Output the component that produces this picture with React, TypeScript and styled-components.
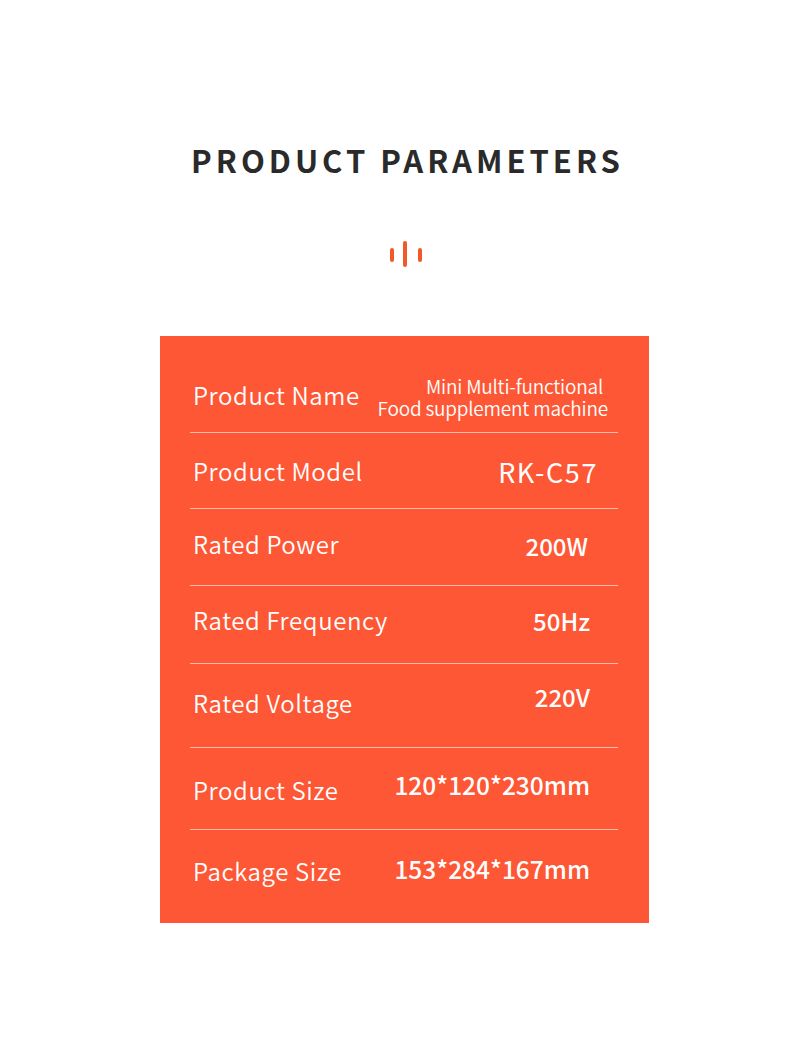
import * as React from 'react';
import styled, { createGlobalStyle } from 'styled-components';

const GlobalStyle = createGlobalStyle`
  html, body {
    margin: 0;
    padding: 0;
    background: #ffffff;
  }
  body {
    font-family: "Noto Sans CJK SC", "Noto Sans", sans-serif;
  }
`;

const Page = styled.div`
  width: 800px;
  height: 1060px;
  display: flex;
  flex-direction: column;
  align-items: center;
  background: #fff;
`;

const Title = styled.h1`
  margin: 138px 0 0 15px;
  font-size: 31px;
  line-height: 44px;
  font-weight: 700;
  letter-spacing: 4px;
  color: #2a2a2a;
`;

const Marker = styled.svg`
  display: block;
  margin-top: 59px;
  margin-left: 16px;
`;

const Card = styled.div`
  margin-top: 69px;
  margin-left: 9px;
  width: 458px;
  padding: 0 1px 0 30px;
  height: 587px;
  background: #fd5735;
  color: #fff;
`;

const Row = styled.div<{ $h: number; $last?: boolean }>`
  display: flex;
  justify-content: space-between;
  align-items: flex-start;
  width: 428px;
  height: ${(p) => p.$h}px;
  border-bottom: ${(p) => (p.$last ? 'none' : '1px solid rgba(255, 255, 255, 0.6)')};
`;

const Label = styled.div<{ $top: number }>`
  margin-top: ${(p) => p.$top}px;
  padding-left: 3px;
  font-size: 24px;
  line-height: 1;
  font-weight: 350;
  letter-spacing: 0.6px;
  white-space: nowrap;
`;

const Value = styled.div<{ $top: number; $right: number; $size?: number; $weight?: number; $spacing?: number }>`
  margin-top: ${(p) => p.$top}px;
  margin-right: ${(p) => p.$right}px;
  font-size: ${(p) => p.$size ?? 24}px;
  line-height: 1;
  font-weight: ${(p) => p.$weight ?? 500};
  letter-spacing: ${(p) => p.$spacing ?? 0}px;
  white-space: nowrap;
  text-align: right;
`;

const NameValue = styled.div`
  margin-top: 39px;
  margin-right: 10px;
  font-size: 19px;
  line-height: 22px;
  font-weight: 350;
  letter-spacing: -0.2px;
  text-align: right;
  white-space: nowrap;
`;

const NameLine = styled.div<{ $indent?: number }>`
  height: 22px;
  padding-right: ${(p) => p.$indent ?? 0}px;
`;

type Param = {
  label: string;
  value: string;
  h: number;
  labelTop: number;
  valueTop: number;
  right: number;
  size?: number;
  weight?: number;
  spacing?: number;
};

const params: Param[] = [
  { label: 'Product Model', value: 'RK-C57', h: 75, labelTop: 26, valueTop: 25, right: 20, size: 27, weight: 400, spacing: 1.6 },
  { label: 'Rated Power', value: '200W', h: 76, labelTop: 23, valueTop: 25, right: 30 },
  { label: 'Rated Frequency', value: '50Hz', h: 77, labelTop: 22, valueTop: 23, right: 28 },
  { label: 'Rated Voltage', value: '220V', h: 83, labelTop: 27, valueTop: 21, right: 28 },
  { label: 'Product Size', value: '120*120*230mm', h: 81, labelTop: 30, valueTop: 25, right: 28, size: 24.5 },
  { label: 'Package Size', value: '153*284*167mm', h: 93, labelTop: 29, valueTop: 27, right: 28, size: 24.5 },
];

export default function App() {
  return (
    <Page>
      <GlobalStyle />
      <Title>PRODUCT PARAMETERS</Title>
      <Marker width="36" height="26" viewBox="0 0 36 26">
        <line x1="2" y1="9" x2="2" y2="19" stroke="#f05a28" strokeWidth="4" strokeLinecap="round" />
        <line x1="15" y1="2" x2="15" y2="24" stroke="#f05a28" strokeWidth="4" strokeLinecap="round" />
        <line x1="30" y1="9" x2="30" y2="19" stroke="#f05a28" strokeWidth="4" strokeLinecap="round" />
      </Marker>
      <Card>
        <Row $h={96}>
          <Label $top={47}>Product Name</Label>
          <NameValue>
            <NameLine $indent={5}>Mini Multi-functional</NameLine>
            <NameLine>Food supplement machine</NameLine>
          </NameValue>
        </Row>
        {params.map((p, i) => (
          <Row key={p.label} $h={p.h} $last={i === params.length - 1}>
            <Label $top={p.labelTop}>{p.label}</Label>
            <Value $top={p.valueTop} $right={p.right} $size={p.size} $weight={p.weight} $spacing={p.spacing}>
              {p.value}
            </Value>
          </Row>
        ))}
      </Card>
    </Page>
  );
}
